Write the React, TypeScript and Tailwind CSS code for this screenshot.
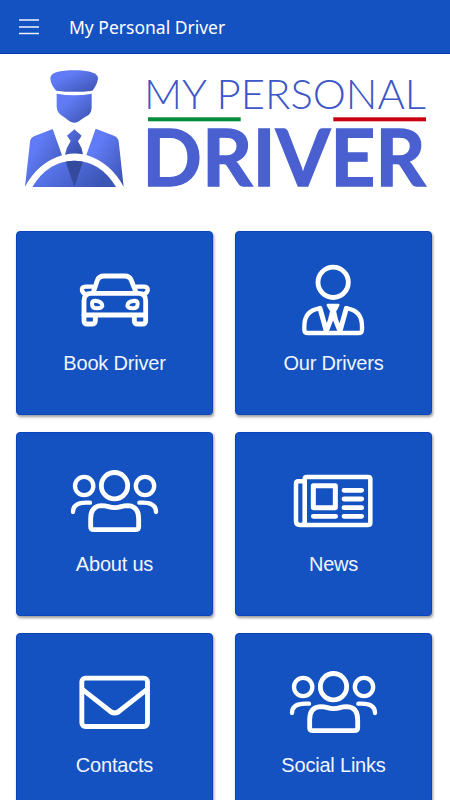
import type { ReactNode } from "react";

function IconFrame({ viewBox, children }: { viewBox: string; children: ReactNode }) {
  return (
    <svg
      viewBox={viewBox}
      className="mr-[2px] h-20 w-[100px] shrink-0"
      fill="none"
      stroke="white"
      strokeWidth={14.500}
      strokeLinecap="round"
      strokeLinejoin="round"
    >
      {children}
    </svg>
  );
}

function CarIcon() {
  return (
    <IconFrame viewBox="12 12 300 240">
      <path d="M101 109 L112 76 Q117 63 132 63 H194 Q209 63 214 76 L227 109" />
      <path d="M72 178 V137 Q72 115 94 115 H235 Q257 115 257 137 V178" />
      <path d="M97 95 H77 Q64 95 66 106 Q69 117 81 118" strokeWidth={13} />
      <path d="M231 95 H251 Q265 95 263 106 Q260 117 248 118" strokeWidth={13} />
      <path d="M72 180 H257" />
      <path d="M72 180 V197 Q72 207 82 207 H95 Q106 207 106 197 V182" />
      <path d="M223 182 V197 Q223 207 234 207 H247 Q257 207 257 197 V180" />
      <path d="M96 146 Q96 137 106 137 Q127 139 127 153 Q124 160 111 160 Q96 160 96 146 Z" strokeWidth={12} />
      <path d="M233 146 Q233 137 223 137 Q202 139 202 153 Q205 160 218 160 Q233 160 233 146 Z" strokeWidth={12} />
    </IconFrame>
  );
}

function DriverIcon() {
  return (
    <IconFrame viewBox="24 12 300 240">
      <circle cx={174.500} cy={82} r={45.500} />
      <path d="M133 160 Q88 167 88 214 V224 Q88 234 99 234 H250 Q261 234 261 224 V214 Q261 167 216 160" strokeWidth={13} />
      <path d="M135 160 L154 228 L174 176 L195 228 L214 160" strokeWidth={15} />
      <path d="M158 150 H190 L183 164 H166 Z" fill="white" strokeWidth={7} />
      <path d="M167 162 H182 L188 190 H160 Z" fill="white" stroke="none" />
    </IconFrame>
  );
}

function PeopleIcon() {
  return (
    <IconFrame viewBox="12 0 300 240">
      <circle cx={163.500} cy={77} r={39.500} />
      <circle cx={72.500} cy={78} r={27.500} strokeWidth={13} />
      <circle cx={255} cy={78} r={27.500} strokeWidth={13} />
      <path d="M90 128 H79 Q39 128 39 156" strokeWidth={13} />
      <path d="M238 128 H248 Q288 128 288 156" strokeWidth={13} />
      <path d="M92 200 V176 Q92 139 124 137 Q136 137 145 140 Q164 146 183 140 Q192 137 204 137 Q236 139 236 176 V200 Q236 209 226 209 H102 Q92 209 92 200 Z" />
    </IconFrame>
  );
}

function NewsIcon() {
  return (
    <IconFrame viewBox="9 0 300 240">
      <path d="M74 189 V57 Q74 51 81 51 H264 Q271 51 271 57 V188 Q271 195 263 195 H60 Q48 195 48 184 V71 Q48 64 55 64 H69" strokeWidth={13.500} />
      <path d="M75 60 V184 Q75 195 62 195" strokeWidth={12} />
      <path d="M100 77 H166 V143 H100 Z" strokeWidth={15} />
      <path d="M192 91 H245 M192 117 H245 M192 143 H245 M192 169 H245 M100 169 H167" />
    </IconFrame>
  );
}

function MailIcon() {
  return (
    <IconFrame viewBox="12 3 300 240">
      <rect x={65.500} y={54.500} width={197} height={145} rx={11} />
      <path d="M67 88 L146 150 Q164 168 182 150 L261 88" strokeLinecap="butt" />
    </IconFrame>
  );
}

const tiles = [
  { label: "Book Driver", icon: <CarIcon /> },
  { label: "Our Drivers", icon: <DriverIcon /> },
  { label: "About us", icon: <PeopleIcon /> },
  { label: "News", icon: <NewsIcon /> },
  { label: "Contacts", icon: <MailIcon /> },
  { label: "Social Links", icon: <PeopleIcon /> },
];

function Logo() {
  return (
    <svg viewBox="0 54 450 177" className="block h-[177px] w-[450px]">
      <defs>
        <linearGradient id="uniform" x1="0" y1="0" x2="1" y2="1">
          <stop offset="0.3" stopColor="#607bf5" />
          <stop offset="1" stopColor="#3a52ad" />
        </linearGradient>
        <linearGradient id="shade" x1="0" y1="0" x2="0.6" y2="1">
          <stop offset="0" stopColor="#5872e8" />
          <stop offset="1" stopColor="#3a51ae" />
        </linearGradient>
        <linearGradient id="wheel" x1="0" y1="0" x2="1" y2="0.35">
          <stop offset="0" stopColor="#6280ff" />
          <stop offset="1" stopColor="#3b55b5" />
        </linearGradient>
      </defs>
      <g transform="translate(10 60) scale(0.33333)">
        <path d="M121 55 C121 37 151 31 193 31 C235 31 264 39 264 55 Q263 73 247 92 Q193 99 139 92 Q122 75 121 55 Z" fill="url(#uniform)" />
        <path d="M140 101 Q193 110 245 101 V143 Q244 162 229 169 C215 176 207 188 193 188 C179 188 170 175 157 168 Q141 158 140 140 Z" fill="url(#uniform)" />
        <path d="M128 207 L156 286 Q85 307 45 380 L60 246 Q61 234 72 229 Z" fill="url(#uniform)" />
        <path d="M257 206 L312 227 Q324 232 326 244 L341 380 Q301 307 229 285 Z" fill="url(#uniform)" />
        <path d="M193 208 L215 227 L204 244 Q216 262 219 283 Q192 277 165 284 Q169 262 182 243 L171 227 Z" fill="url(#shade)" />
        <path d="M67 381 Q114 302 193 302 Q271 302 318 381 Z" fill="url(#wheel)" />
        <path d="M167 305 Q193 299 219 305 L193 380 Z" fill="#334a9d" />
      </g>
      <g fontFamily="Lato, sans-serif">
        <text x={144} y={108.800} fontSize={41.500} fontWeight={300} fill="#3d57c8" textLength={282} lengthAdjust="spacingAndGlyphs">
          MY PERSONAL
        </text>
        <text
          x={142.300}
          y={185.600}
          fontSize={78}
          fontWeight={700}
          fill="#4a60d0"
          stroke="#4a60d0"
          strokeWidth={1.300}
          textLength={283.500}
          lengthAdjust="spacingAndGlyphs"
        >
          DRIVER
        </text>
      </g>
      <rect x={148} y={117.300} width={92.700} height={4} fill="#008c3b" />
      <rect x={333.300} y={117.300} width={92.700} height={4} fill="#c9000e" />
    </svg>
  );
}

export default function App() {
  return (
    <div className="h-[800px] w-[450px] overflow-hidden bg-white">
      <header className="flex h-[54px] items-center border-b border-[#0439b5] bg-[#1552c1] pl-[19px] text-white">
        <svg viewBox="0 0 20 16" className="h-4 w-5" stroke="#eef3ff" strokeWidth={1.500}>
          <path d="M0 1 H20 M0 8 H20 M0 14.500 H20" />
        </svg>
        <h1 className="ml-[30px] font-['Noto_Sans'] text-[17.5px] leading-6">My Personal Driver</h1>
      </header>
      <Logo />
      <main className="grid grid-cols-[197px_197px] gap-x-[22px] gap-y-[17px] pl-4">
        {tiles.map((tile) => (
          <button
            key={tile.label}
            className="flex h-[184px] flex-col items-center rounded-[4px] border border-[#0a43bb] bg-[#1552c1] pt-[27px] shadow-[1px_2px_3px_rgba(0,0,0,0.4)]"
          >
            {tile.icon}
            <span className="mt-3 font-['Liberation_Sans'] text-[20px] leading-6 tracking-[-0.2px] text-[#f1f5ff]">{tile.label}</span>
          </button>
        ))}
      </main>
    </div>
  );
}
